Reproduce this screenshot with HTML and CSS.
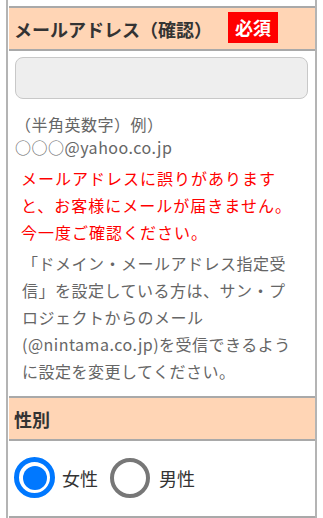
FILE: index.html
```html
<!DOCTYPE html>
<html lang="ja">
<head>
<meta charset="utf-8">
<title>フォーム</title>
<link rel="stylesheet" href="styles.css">
</head>
<body>
<div class="form">
  <div class="field-head">
    <span class="field-label">メールアドレス（確認）</span>
    <span class="required">必須</span>
  </div>
  <div class="field-body">
    <input class="text-input" type="text">
    <p class="hint">（半角英数字）例）<br>○○○@yahoo.co.jp</p>
    <p class="warn">メールアドレスに誤りがあります<br>と、お客様にメールが届きません。<br>今一度ご確認ください。</p>
    <p class="note">「ドメイン・メールアドレス指定受<br>信」を設定している方は、サン・プ<br>ロジェクトからのメール<br>(@nintama.co.jp)を受信できるよう<br>に設定を変更してください。</p>
  </div>
  <div class="field-head">
    <span class="field-label">性別</span>
  </div>
  <div class="radio-body">
    <label class="radio-item">
      <span class="radio radio-on"><span class="radio-dot"></span></span>
      <span class="radio-text">女性</span>
    </label>
    <label class="radio-item">
      <span class="radio radio-off"></span>
      <span class="radio-text">男性</span>
    </label>
  </div>
</div>
</body>
</html>
```
FILE: styles.css
```css
html, body {
  margin: 0;
  padding: 0;
  background: #fff;
}
body {
  font-family: "Noto Sans CJK JP", "Noto Sans", sans-serif;
  color: #333;
}
.form {
  margin: 0 6px;
  padding: 6px 0 0 1px;
  border-left: 2px solid #b4b4b4;
  border-right: 2px solid #b4b4b4;
  min-height: 600px;
}
.field-head {
  display: flex;
  align-items: center;
  height: 39px;
  box-sizing: content-box;
  padding: 0 0 2px 5px;
  margin: 0;
  background: #ffd5b5;
  border-top: 2px solid #a9a9a9;
  border-bottom: 2px solid #a9a9a9;
  font-size: 18px;
  font-weight: bold;
  color: #333;
}
.field-label {
  line-height: 24px;
  padding-top: 2px;
}
.required {
  margin-left: 16px;
  padding: 0 7px;
  background: #ff0000;
  color: #fff;
  line-height: 31px;
  font-size: 18px;
  font-weight: bold;
}
.field-body {
  padding: 6px 7px 11px 6px;
}
.text-input {
  display: block;
  box-sizing: border-box;
  width: 100%;
  height: 42px;
  margin: 0;
  background: #eeeeee;
  border: 1px solid #c8c8c8;
  border-radius: 8px;
}
.hint {
  margin: 14px 0 0 0;
  font-size: 16px;
  line-height: 23px;
  letter-spacing: 0.5px;
  color: #666;
}
.warn {
  margin: 6px 0 0 6px;
  font-size: 16px;
  line-height: 27px;
  letter-spacing: 1px;
  color: #ff0000;
}
.note {
  margin: 4px 0 0 7px;
  font-size: 16px;
  line-height: 27px;
  letter-spacing: 0.5px;
  color: #666;
}
.radio-body {
  display: flex;
  align-items: center;
  padding: 16px 6px 18px 5px;
  border-bottom: 2px solid #a9a9a9;
}
.radio-item {
  display: flex;
  align-items: center;
}
.radio-item + .radio-item {
  margin-left: 12px;
}
.radio {
  display: grid;
  place-items: center;
  box-sizing: border-box;
  width: 41px;
  height: 41px;
  border-radius: 50%;
  background: #fff;
}
.radio-on {
  border: 5px solid #0078ff;
}
.radio-off {
  width: 40px;
  height: 40px;
  border: 4px solid #777;
}
.radio-dot {
  width: 24px;
  height: 24px;
  border-radius: 50%;
  background: #0078ff;
}
.radio-text {
  margin-left: 7px;
  font-size: 18px;
  line-height: 24px;
  color: #333;
}
.radio-off + .radio-text {
  margin-left: 9px;
}
```
